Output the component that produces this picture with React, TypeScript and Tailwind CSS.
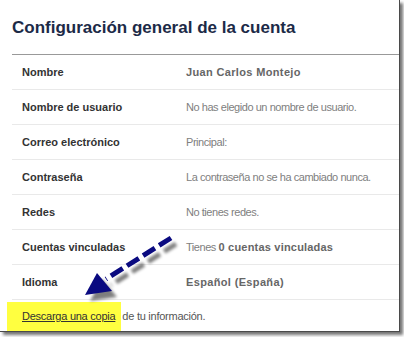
const rows: { label: string; value: React.ReactNode; bold?: boolean }[] = [
  { label: 'Nombre', value: 'Juan Carlos Montejo', bold: true },
  { label: 'Nombre de usuario', value: 'No has elegido un nombre de usuario.' },
  { label: 'Correo electrónico', value: 'Principal:' },
  { label: 'Contraseña', value: 'La contraseña no se ha cambiado nunca.' },
  { label: 'Redes', value: 'No tienes redes.' },
  {
    label: 'Cuentas vinculadas',
    value: (
      <>
        Tienes <b className="font-bold text-[#666] tracking-[0.2px]">0 cuentas vinculadas</b>
      </>
    ),
  },
  { label: 'Idioma', value: 'Español (España)', bold: true },
]

function Arrow() {
  return (
    <svg className="absolute left-0 top-0" width="404" height="337" viewBox="0 0 404 337">
      <defs>
        <filter id="blur" x="-20%" y="-20%" width="140%" height="140%">
          <feGaussianBlur stdDeviation="1.6" />
        </filter>
      </defs>
      {/* shadow */}
      <g transform="translate(5 6)" filter="url(#blur)" opacity="0.5">
        <line x1="171" y1="238" x2="106" y2="279" stroke="#000" strokeWidth="5" strokeDasharray="14 5" />
        <polygon points="85,295 97,273 112,291" fill="#000" />
      </g>
      <line x1="171" y1="238" x2="106" y2="279" stroke="#0a0a80" strokeWidth="5" strokeDasharray="14 5" />
      <polygon points="85,295 97,273 112,291" fill="#0a0a80" />
    </svg>
  )
}

export default function App() {
  return (
    <div className="relative w-[404px] h-[337px] bg-white overflow-hidden font-['Liberation_Sans',Arial,sans-serif]">
      <div className="w-[400px] h-[332px] bg-white border-r border-b border-[#4a4a4a] shadow-[3px_3px_3px_rgba(0,0,0,0.55)] pl-[12px] flex flex-col">
        <h2 className="h-[54px] flex items-center pt-[2px] text-[17px] font-bold text-[#1c2a47]">
          Configuración general de la cuenta
        </h2>
        <div className="border-t border-[#999]">
          {rows.map((r) => (
            <div key={r.label} className="h-[35px] flex items-center border-b border-[#e9e9e9] text-[11px]">
              <div className="w-[174px] pl-[10px] font-bold text-[#333]">{r.label}</div>
              <div
                className={
                  r.bold ? 'font-bold text-[#666] tracking-[0.35px]' : 'text-[#808080] tracking-[-0.45px]'
                }
              >
                {r.value}
              </div>
            </div>
          ))}
        </div>
        <div className="flex-1 flex items-stretch pt-[2px] text-[11px] text-[#555] tracking-[-0.25px]">
          <div className="flex items-center -ml-[5px] pl-[15px] pr-[6px] bg-[#ffff40]">
            <span className="underline text-[#333]">Descarga una copia</span>
          </div>
          <div className="flex items-center pl-[1px]">de tu información.</div>
        </div>
      </div>
      <Arrow />
    </div>
  )
}
